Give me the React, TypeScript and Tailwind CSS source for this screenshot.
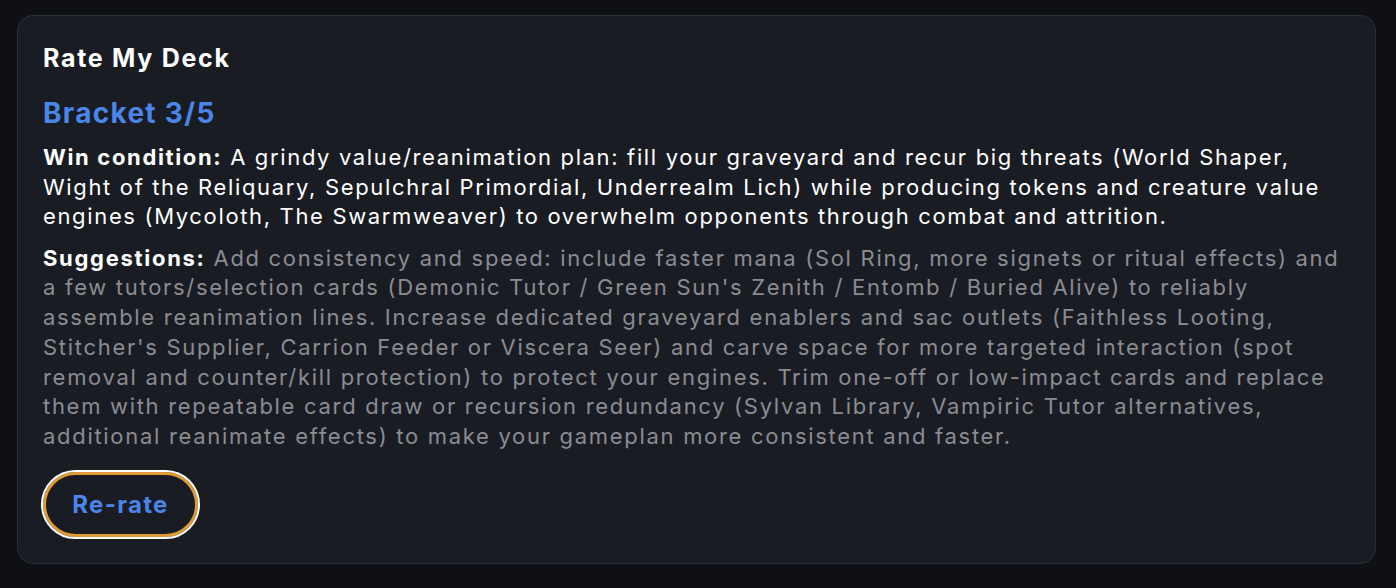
import React from "react";

export default function App() {
  return (
    <div className="min-h-[588px] w-full bg-[#0e1015] pl-[17px] pr-[20px] pt-[15px] pb-[25px]" style={{ fontFamily: "Inter, 'Noto Sans', sans-serif" }}>
      <div className="rounded-[16px] border border-[#2c2f36] bg-[#1a1c23] px-[25px] pt-[26px] pb-[26px]">
        <h2 className="text-[25px] font-bold leading-[32px] tracking-[1.7px] text-white">Rate My Deck</h2>
        <div className="mt-[22px] text-[28px] font-bold leading-[34px] tracking-[1.3px] text-[#4a86e8]">Bracket 3/5</div>
        <p className="mt-[13px] text-[22px] leading-[29.5px] tracking-[1.65px] text-white">
          <span className="font-bold">Win condition:</span> A grindy value/reanimation plan: fill your graveyard and recur big threats (World Shaper, Wight of the Reliquary, Sepulchral Primordial, Underrealm Lich) while producing tokens and creature value engines (Mycoloth, The Swarmweaver) to overwhelm opponents through combat and attrition.
        </p>
        <p className="mt-[12px] text-[22px] leading-[29.8px] tracking-[1.7px] text-[#8a8c92]">
          <span className="font-bold text-white">Suggestions:</span> Add consistency and speed: include faster mana (Sol Ring, more signets or ritual effects) and a few tutors/selection cards (Demonic Tutor / Green Sun's Zenith / Entomb / Buried Alive) to reliably assemble reanimation lines. Increase dedicated graveyard enablers and sac outlets (Faithless Looting, Stitcher's Supplier, Carrion Feeder or Viscera Seer) and carve space for more targeted interaction (spot removal and counter/kill protection) to protect your engines. Trim one-off or low-impact cards and replace them with repeatable card draw or recursion redundancy (Sylvan Library, Vampiric Tutor alternatives, additional reanimate effects) to make your gameplan more consistent and faster.
        </p>
        <div className="mt-[20px]">
          <button className="h-[65px] w-[155px] rounded-full border-[3px] border-[#e09a35] bg-[#1a1c23] text-[24px] font-bold tracking-[1.3px] text-[#4a86e8] outline outline-2 outline-white">
            Re-rate
          </button>
        </div>
      </div>
    </div>
  );
}
